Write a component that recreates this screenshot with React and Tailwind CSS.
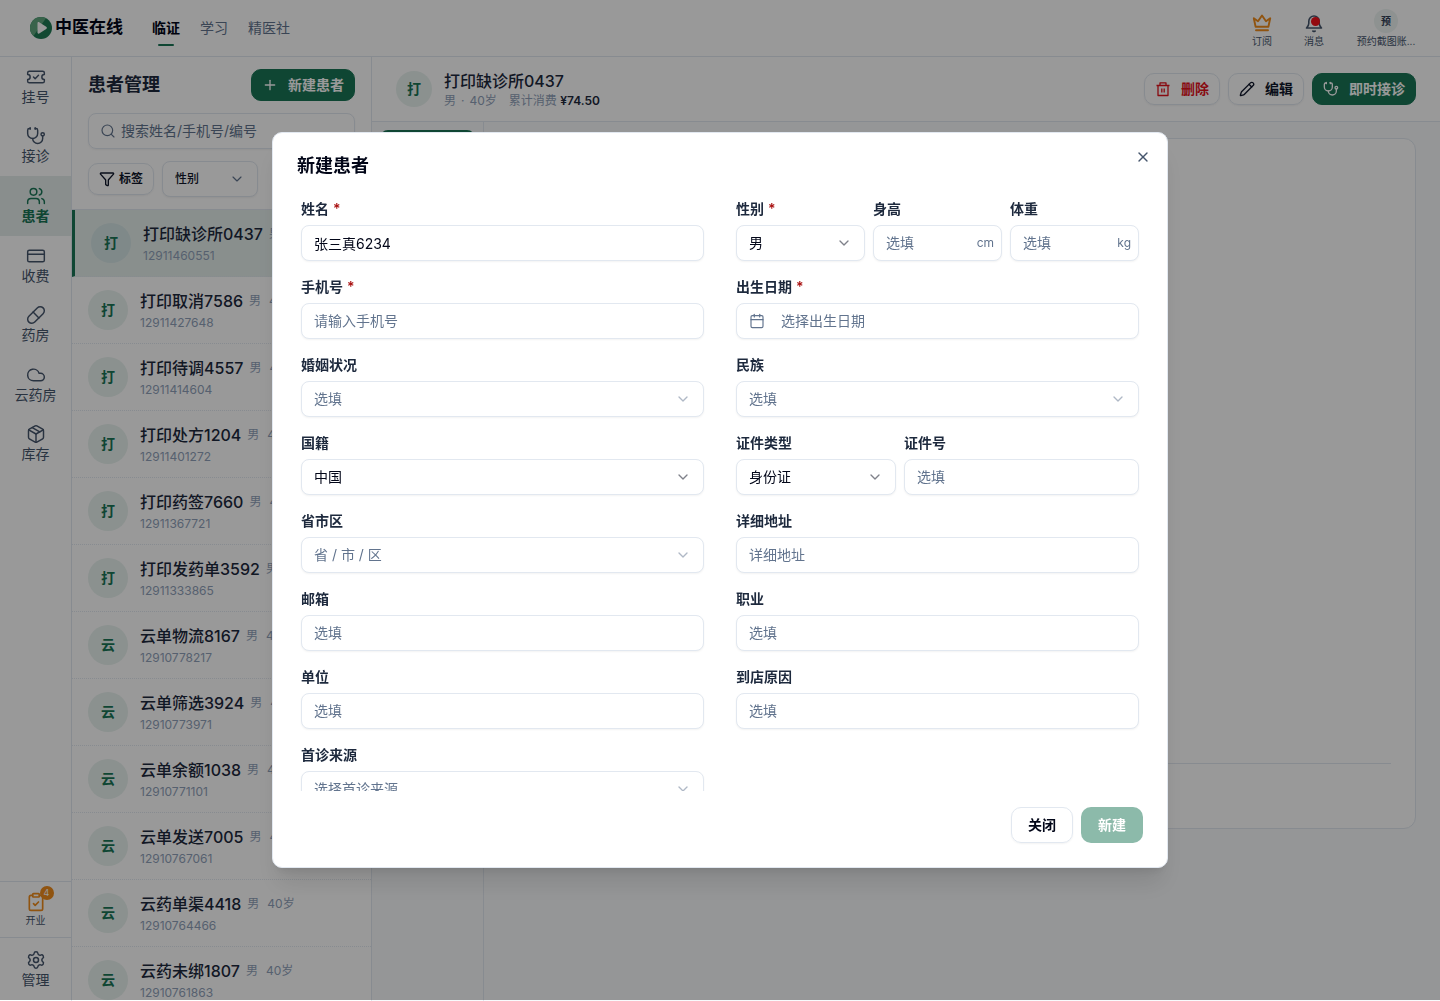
import React from "react";
import {
  TicketCheck, Stethoscope, Users, CreditCard, Pill, Cloud, Package, Settings,
  Plus, Search, Filter, ChevronDown, Pencil, X, Calendar, ClipboardCheck,
} from "lucide-react";

const modules = [
  { label: "挂号", icon: TicketCheck },
  { label: "接诊", icon: Stethoscope },
  { label: "患者", icon: Users, active: true },
  { label: "收费", icon: CreditCard },
  { label: "药房", icon: Pill },
  { label: "云药房", icon: Cloud },
  { label: "库存", icon: Package },
];

const patients = [
  { name: "打印缺诊所0437", code: "12911460551", active: true },
  { name: "打印取消7586", code: "12911427648" },
  { name: "打印待调4557", code: "12911414604" },
  { name: "打印处方1204", code: "12911401272" },
  { name: "打印药签7660", code: "12911367721" },
  { name: "打印发药单3592", code: "12911333865" },
  { name: "云单物流8167", code: "12910778217" },
  { name: "云单筛选3924", code: "12910773971" },
  { name: "云单余额1038", code: "12910771101" },
  { name: "云单发送7005", code: "12910767061" },
  { name: "云药单渠4418", code: "12910764466" },
  { name: "云药未绑1807", code: "12910761863" },
];

function Logo() {
  return (
    <svg className="size-[22px]" viewBox="0 0 22 22" aria-hidden="true">
      <circle cx="11" cy="11" r="11" fill="#1f7a54" />
      <path d="M11 0A11 11 0 0 0 3.5 19L9 11l7-9.8A11 11 0 0 0 11 0Z" fill="#5fa67e" />
      <path d="M7.5 6.2c0-1 .9-1.4 1.7-.9l7 4.5c.9.6.9 1.6 0 2.2l-7 4.5c-.8.5-1.7.1-1.7-.9Z" fill="#fff" />
    </svg>
  );
}

function TrashIcon() {
  return (
    <svg className="size-4" viewBox="0 0 16 16" fill="none" stroke="currentColor" strokeWidth="1.3" strokeLinejoin="round" aria-hidden="true">
      <path d="M1.500 4.500h13M3 4.500v10h10v-10M5 4.500v-2.700h6v2.700M6.800 7.500v4M9.200 7.500v4" />
    </svg>
  );
}

function CrownIcon() {
  return (
    <svg className="size-5" viewBox="0 0 20 20" fill="none" stroke="currentColor" strokeWidth="1.9" strokeLinecap="round" strokeLinejoin="round" aria-hidden="true">
      <path d="M1.800 5.200 6 8.200l4-5.700 4 5.700 4.200-3-1.800 8.600H3.600ZM4 17.200h12" />
    </svg>
  );
}

function BellIcon() {
  return (
    <svg className="size-5" viewBox="0 0 20 20" fill="none" stroke="currentColor" strokeWidth="1.600" strokeLinecap="round" strokeLinejoin="round" aria-hidden="true">
      <path d="M2.500 15h15c-1.600-1.300-2.300-2.700-2.300-4.700V8.200a5.200 5.200 0 0 0-10.400 0v2.100c0 2-.700 3.400-2.300 4.700Z" />
      <path d="M8.800 18 10 18.600 11.200 18" />
    </svg>
  );
}

function Avatar({ text, className = "size-10" }) {
  return (
    <span className={`flex shrink-0 items-center justify-center rounded-full text-sm font-semibold text-[#197556] ${className}`}>
      {text}
    </span>
  );
}

function TopBar() {
  return (
    <header className="flex h-[57px] shrink-0 items-center justify-between border-b border-slate-200 bg-white pr-6 pl-[30px]">
      <div className="flex h-full items-center">
        <a href="#home" className="flex items-center gap-[3px] text-[17px] font-bold text-slate-950">
          <Logo />
          中医在线
        </a>
        <nav className="ml-[29px] flex h-full items-center gap-5 text-sm text-slate-500">
          <a href="#clinic" className="relative flex h-full items-center font-bold text-slate-950">
            临证
            <span className="absolute bottom-2.5 left-1/2 h-0.5 w-4 -translate-x-1/2 rounded-full bg-[#197556]" />
          </a>
          <a href="#study">学习</a>
          <a href="#club">精医社</a>
        </nav>
      </div>
      <div className="flex h-full items-end pb-2 text-[10px] leading-[14px] text-slate-600">
        <button className="flex w-[52px] flex-col items-center gap-px">
          <span className="text-[#f08c1c]">
            <CrownIcon />
          </span>
          订阅
        </button>
        <button className="flex w-[52px] flex-col items-center gap-px">
          <span className="relative">
            <BellIcon />
            <span className="absolute top-1 right-1 size-[9px] rounded-full bg-[#f50f1a]" />
          </span>
          消息
        </button>
        <button className="ml-4 flex w-[60px] flex-col items-center gap-px">
          <span className="flex size-6 items-center justify-center rounded-full bg-[#edf4f2] font-bold text-slate-700">预</span>
          <span className="whitespace-nowrap">预约截图账...</span>
        </button>
      </div>
    </header>
  );
}

function SideBar() {
  return (
    <aside className="flex w-[72px] shrink-0 flex-col justify-between border-r border-slate-200 bg-white text-sm text-slate-600">
      <nav className="flex h-[417px] flex-col">
        {modules.map(({ label, icon: Icon, active }) => (
          <a
            key={label}
            href={`#${label}`}
            className={`flex flex-1 flex-col items-center justify-center ${active ? "bg-[#e4edec] font-bold text-[#197556]" : ""}`}
          >
            <Icon className="size-5" strokeWidth={1.75} />
            {label}
          </a>
        ))}
      </nav>
      <div>
        <a href="#open" className="flex h-14 flex-col items-center justify-center border-t border-slate-200 text-[10px] leading-4">
          <span className="relative">
            <ClipboardCheck className="size-5 text-[#f08c1c]" strokeWidth={2} />
            <span className="absolute -top-1.5 -right-2 flex size-3.5 items-center justify-center rounded-full bg-[#f08c1c] text-[9px] text-white">4</span>
          </span>
          开业
        </a>
        <a href="#manage" className="flex h-16 flex-col items-center justify-center border-t border-slate-200">
          <Settings className="size-5" strokeWidth={1.75} />
          管理
        </a>
      </div>
    </aside>
  );
}

function PatientList() {
  return (
    <section className="flex w-[300px] shrink-0 flex-col border-r border-slate-200 bg-white">
      <div className="border-b border-slate-200 px-4 pt-3 pb-3">
        <div className="flex items-center justify-between">
          <h1 className="text-lg font-bold text-slate-800">患者管理</h1>
          <button className="flex h-8 items-center gap-2.5 rounded-[10px] border border-[#197556] bg-[#197556] px-2.5 text-sm font-bold text-white">
            <Plus className="size-4" strokeWidth={2} />
            新建患者
          </button>
        </div>
        <label className="mt-3 flex h-9 items-center gap-[5px] rounded-lg border border-slate-200 px-[11px] shadow-xs">
          <Search className="size-4 text-slate-500" strokeWidth={1.75} />
          <input aria-label="搜索患者" placeholder="搜索姓名/手机号/编号" className="min-w-0 flex-1 text-sm outline-none placeholder:text-slate-500" />
        </label>
        <div className="mt-3 flex items-center gap-2 text-xs font-medium text-slate-900">
          <button className="flex h-8 items-center gap-1 rounded-[10px] border border-slate-200 px-2.5 font-semibold shadow-xs">
            <Filter className="size-4" strokeWidth={2} />
            标签
          </button>
          <span className="relative">
            <select aria-label="性别筛选" className="h-9 w-24 appearance-none rounded-lg border border-slate-200 bg-white px-3 shadow-xs">
              <option>性别</option>
            </select>
            <ChevronDown className="pointer-events-none absolute top-2.5 right-[13px] size-4 text-slate-500" strokeWidth={1.75} />
          </span>
        </div>
      </div>
      <ul className="min-h-0 flex-1 overflow-hidden">
        {patients.map((p) => (
          <li
            key={p.code}
            className={`flex h-[67px] items-center gap-3 border-b border-b-slate-200 px-4 [border-bottom-style:dotted] ${p.active ? "border-l-3 border-l-[#197556] bg-[#e5efec]" : ""}`}
          >
            <Avatar text={p.name[0]} className={p.active ? "size-10 bg-[#d4e4e5]" : "size-10 bg-[#e8f2ef]"} />
            <div className="flex min-w-0 flex-col gap-0.5">
              <p className="flex items-center gap-1.5 text-base whitespace-nowrap">
                <span className="font-medium text-slate-800">{p.name}</span>
                <span className="flex gap-2 text-xs text-slate-400">
                  <span>男</span>
                  <span>40岁</span>
                </span>
              </p>
              <p className="text-xs text-slate-400">{p.code}</p>
            </div>
          </li>
        ))}
      </ul>
    </section>
  );
}

function PatientDetail() {
  return (
    <main className="flex min-w-0 flex-1 flex-col bg-slate-50">
      <div className="flex h-[65px] shrink-0 items-center justify-between border-b border-slate-200 bg-white px-6">
        <div className="flex items-center gap-3">
          <Avatar text="打" className="size-9 bg-[#e8f2ef]" />
          <div>
            <h2 className="text-base font-medium text-slate-800">打印缺诊所0437</h2>
            <p className="flex text-xs text-slate-400">
              <span className="flex gap-[5px]">
                <span>男</span>
                <span>·</span>
                <span>40岁</span>
              </span>
              <span className="ml-3">
                累计消费 <b className="font-semibold text-slate-800">¥74.50</b>
              </span>
            </p>
          </div>
        </div>
        <div className="flex gap-2 text-sm font-bold">
          <button className="flex h-8 items-center gap-2.5 rounded-[10px] border border-slate-200 px-2.5 text-[#e3121c] shadow-xs">
            <TrashIcon />
            删除
          </button>
          <button className="flex h-8 items-center gap-2.5 rounded-[10px] border border-slate-200 px-2.5 text-slate-900 shadow-xs">
            <Pencil className="size-4" strokeWidth={2} />
            编辑
          </button>
          <button className="flex h-8 items-center gap-2.5 rounded-[10px] border border-[#197556] bg-[#197556] px-2.5 text-white">
            <Stethoscope className="size-4" strokeWidth={2} />
            即时接诊
          </button>
        </div>
      </div>
      <div className="flex min-h-0 flex-1">
        <div className="w-28 shrink-0 border-r border-slate-200 p-2">
          <button className="h-9 w-full rounded-lg bg-[#197556] text-sm text-white">概览</button>
        </div>
        <div className="min-w-0 flex-1 py-4 pr-6 pl-4">
          <div className="flex h-[691px] flex-col justify-end rounded-xl border border-slate-200 bg-white px-6">
            <hr className="mb-16 border-slate-200" />
          </div>
        </div>
      </div>
    </main>
  );
}

const box = "h-9 w-full rounded-lg border border-slate-200 bg-white px-3 text-sm shadow-xs outline-none";

function Field({ id, label, required, children }) {
  return (
    <div className="flex min-w-0 flex-col gap-1.5">
      <label htmlFor={id} className="flex gap-1 text-sm font-semibold text-slate-800">
        {label}
        {required && <span className="text-[#a80f0f]">*</span>}
      </label>
      {children}
    </div>
  );
}

function TextField({ id, label, required, value, placeholder = "选填", unit }) {
  return (
    <Field id={id} label={label} required={required}>
      <div className="relative">
        <input id={id} defaultValue={value} placeholder={placeholder} className={`${box} text-slate-950 placeholder:text-slate-500`} />
        {unit && <span className="absolute inset-y-0 right-2 flex items-center text-xs text-slate-500">{unit}</span>}
      </div>
    </Field>
  );
}

function SelectField({ id, label, required, value, placeholder = "选填" }) {
  return (
    <Field id={id} label={label} required={required}>
      <div className={`relative ${value ? "text-slate-950" : "text-slate-500"}`}>
        <select id={id} className={`${box} appearance-none`}>
          <option>{value || placeholder}</option>
        </select>
        <ChevronDown className="pointer-events-none absolute top-2.5 right-[13px] size-4 opacity-50" />
      </div>
    </Field>
  );
}

function NewPatientDialog() {
  return (
    <div className="fixed inset-x-0 top-0 bottom-px flex items-center justify-center bg-black/40">
      <section role="dialog" aria-modal="true" aria-labelledby="dialog-title" className="relative flex w-full max-w-4xl flex-col gap-4 rounded-[10px] border border-slate-200 bg-white p-6 shadow-xl">
        <h2 id="dialog-title" className="text-lg leading-none font-bold text-slate-950">新建患者</h2>
        <button aria-label="关闭对话框" className="absolute top-4 right-4 text-slate-600">
          <X className="size-4" strokeWidth={2} />
        </button>
        <form id="patient-form" className="grid h-[60vh] grid-cols-2 content-start gap-x-8 gap-y-4 overflow-hidden px-1 pt-2">
          <TextField id="name" label="姓名" required value="张三真6234" />
          <div className="grid grid-cols-3 gap-2">
            <SelectField id="gender" label="性别" required value="男" />
            <TextField id="height" label="身高" unit="cm" />
            <TextField id="weight" label="体重" unit="kg" />
          </div>
          <TextField id="phone" label="手机号" required placeholder="请输入手机号" />
          <Field id="birthday" label="出生日期" required>
            <button id="birthday" type="button" className={`${box} flex items-center gap-4 text-slate-500`}>
              <Calendar className="size-4" strokeWidth={1.75} />
              选择出生日期
            </button>
          </Field>
          <SelectField id="marriage" label="婚姻状况" />
          <SelectField id="ethnicity" label="民族" />
          <SelectField id="country" label="国籍" value="中国" />
          <div className="grid grid-cols-[160px_1fr] gap-2">
            <SelectField id="id-type" label="证件类型" value="身份证" />
            <TextField id="id-number" label="证件号" />
          </div>
          <SelectField id="region" label="省市区" placeholder="省 / 市 / 区" />
          <TextField id="address" label="详细地址" placeholder="详细地址" />
          <TextField id="email" label="邮箱" />
          <TextField id="job" label="职业" />
          <TextField id="company" label="单位" />
          <TextField id="reason" label="到店原因" />
          <SelectField id="source" label="首诊来源" placeholder="选择首诊来源" />
        </form>
        <div className="flex justify-end gap-2 text-sm font-bold">
          <button type="button" className="h-9 rounded-[10px] border border-slate-200 px-4 text-slate-950 shadow-xs">关闭</button>
          <button type="submit" form="patient-form" disabled className="h-9 rounded-[10px] border border-transparent bg-[#8cbaaa] px-4 text-white">新建</button>
        </div>
      </section>
    </div>
  );
}

export default function App() {
  return (
    <div className="flex h-screen flex-col overflow-hidden bg-white font-[Inter,'Noto_Sans_CJK_SC',sans-serif]">
      <TopBar />
      <div className="flex min-h-0 flex-1">
        <SideBar />
        <PatientList />
        <PatientDetail />
      </div>
      <NewPatientDialog />
    </div>
  );
}
